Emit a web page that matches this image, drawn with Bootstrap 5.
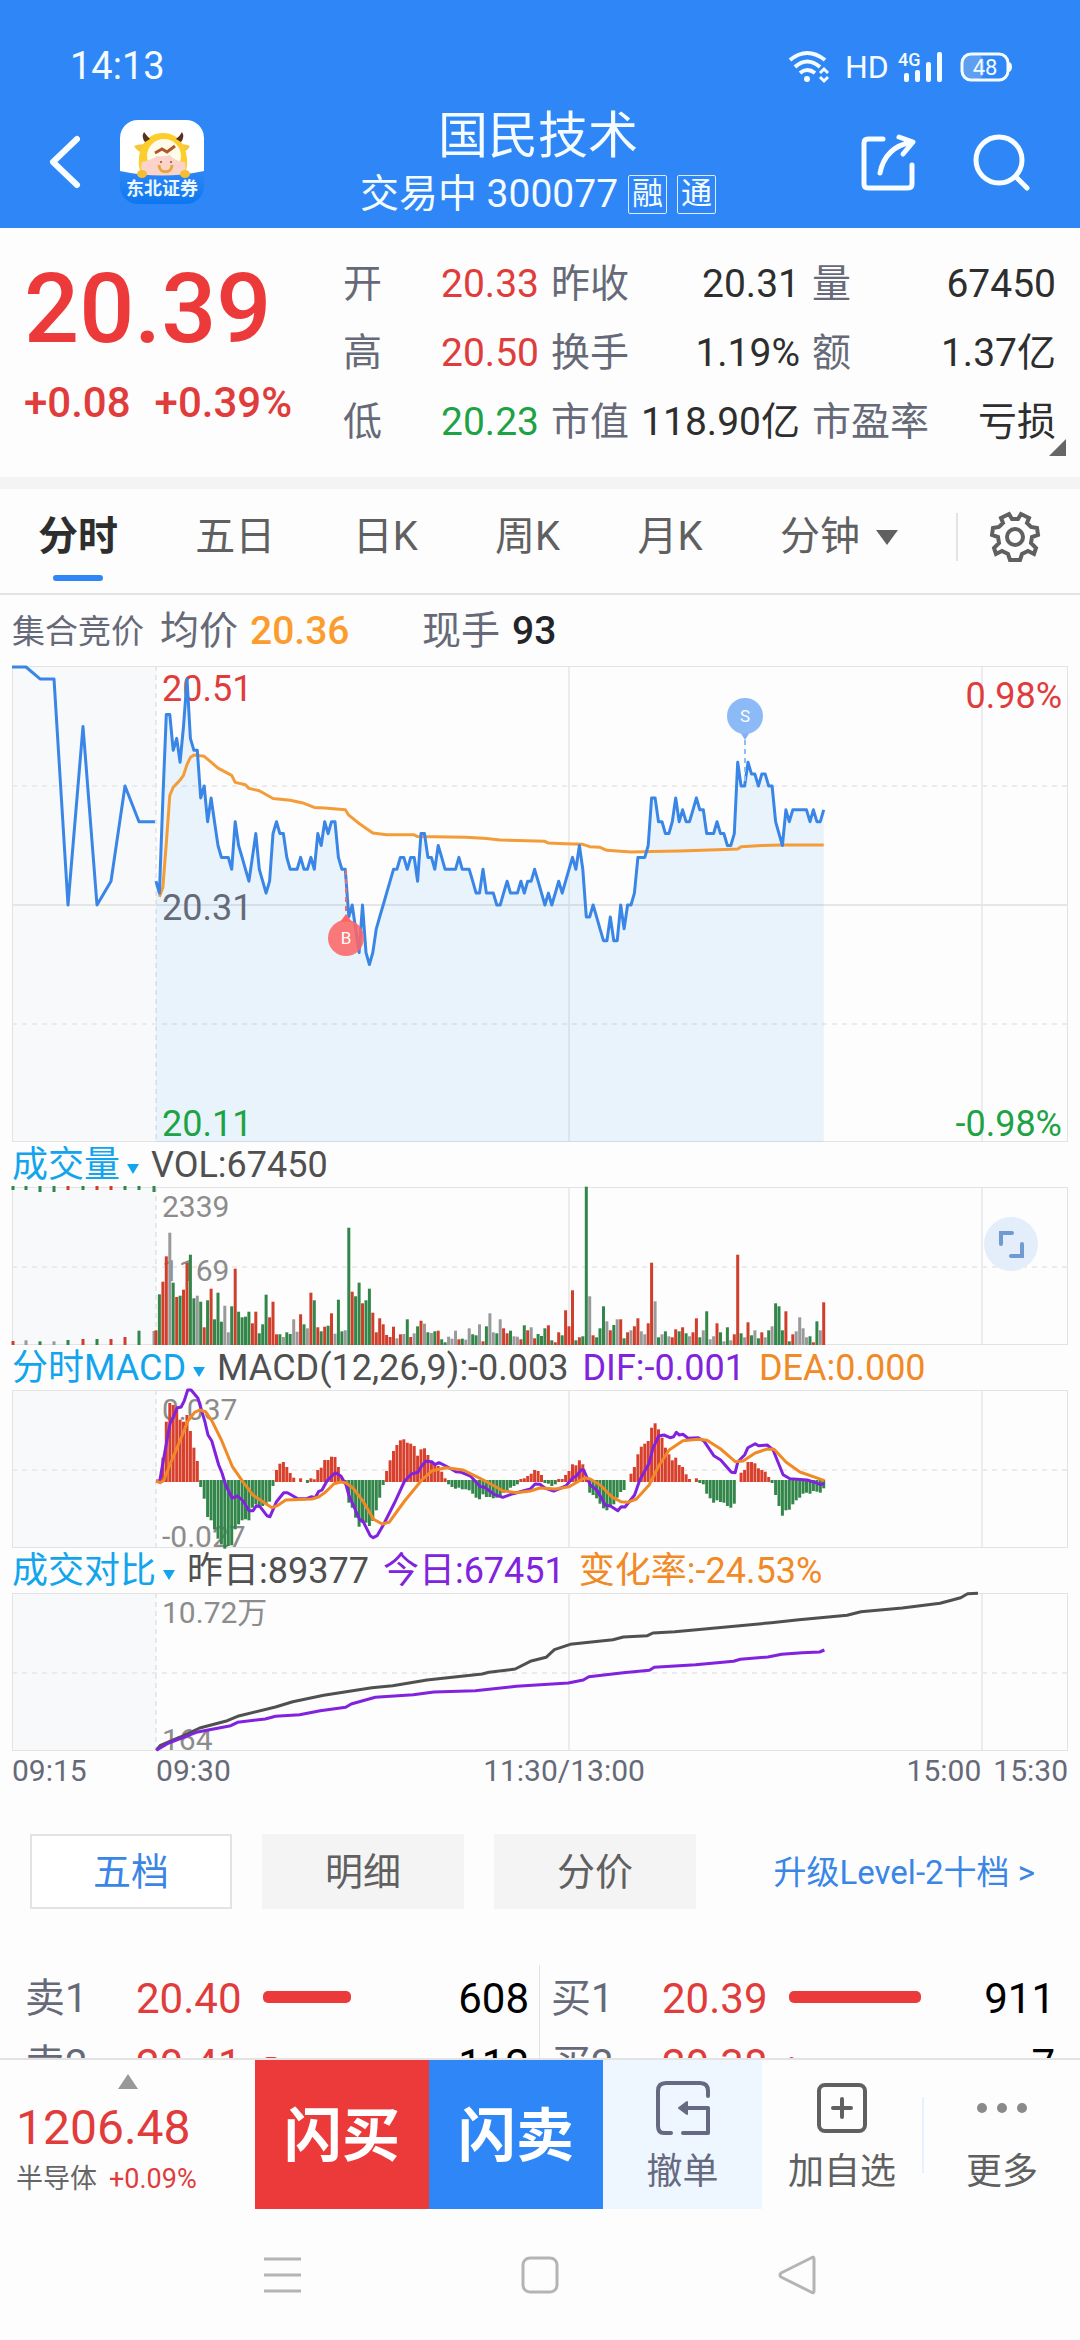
<!DOCTYPE html>
<html lang="zh-CN">
<head>
<meta charset="utf-8">
<meta name="viewport" content="width=device-width, initial-scale=1">
<title>国民技术 300077</title>
<link rel="stylesheet" href="https://cdn.jsdelivr.net/npm/bootstrap@5.3.0/dist/css/bootstrap.min.css">
<style>
:root{--up:#e03c3c;--down:#1da345;--brand:#2f86f7;--muted:#666a78;--ink:#2e2e2e;--rule:#e3e3e3}
body{font-family:Roboto,"Noto Sans CJK SC",sans-serif;font-size:39px;line-height:1.2;color:var(--ink);background:#fdfdfd}
button{font:inherit;color:inherit;background:none;border:0;padding:0}
svg{display:block;overflow:visible}
.up{color:var(--up)}.down{color:var(--down)}.soft{color:var(--muted)}
.w-med{font-weight:500}
.top{background:var(--brand);color:#f4fcff}
.status{height:102px;padding:32px 68px 0 70px;font-size:38px}
.status-icons{gap:15px}
.hd{font-size:32px;width:38px}
.titlebar{height:126px;padding:0 50px 6px 46px}
.side{flex:1 1 0}
.brand-gap{gap:36px}.tool-gap{gap:56px}
.stock-name{font-size:50px;line-height:60px;font-weight:400}
.stock-sub{font-size:39px;line-height:48px;margin-top:4px;gap:10px}
.tagbox{width:39px;height:39px;border:1px solid #dcebff;border-radius:2px;font-size:31px;line-height:36px;text-align:center}
.quote{height:249px;padding:22px 24px 0 0}
.pricebox{width:343px;padding:9px 0 0 24px}
.price{font-size:97px;line-height:100px;color:#ec3a3a}
.delta{font-size:42px;line-height:48px;margin-top:20px;gap:24px;color:#e03c3c}
.facts{gap:12px}
.facts dl{margin:0}
.facts dl>div{height:69px}
.facts dt{font-weight:400;color:var(--muted)}
.facts dd{margin:0}
.c-a{flex:196}.c-b{flex:249}.c-c{flex:244}
.corner{right:14px;bottom:21px}
.band{height:12px;background:#f4f4f4}
.period{height:106px;border-bottom:2px solid var(--rule);font-size:40px;color:#606060;padding:0 40px 8px 38px}
.period-tabs{width:860px}
.period .on{color:#2e2e2e;font-weight:700}
.period .on::after{content:"";position:absolute;left:15px;right:15px;bottom:-20px;height:6px;border-radius:3px;background:var(--brand)}
.vline{width:2px;height:48px;background:#e3e3e3}
.info{height:71px;padding:2px 0 0 12px}
.info-a{font-size:33px;width:148px}
.info b{margin-left:12px}
.info .avg{width:172px;color:#fb9c2e}
.charts{padding:0 12px}
.charts svg{width:100%;height:auto}
.caption-row{height:45px;font-size:36px;line-height:44px;color:#505050}
.caption-row button{color:#12a5ee;margin-right:12px}
.caption-row span{margin-right:14px}
.caption-row button svg{width:12px;margin-left:7px;margin-top:8px}
.violet{color:#8122de}.amber{color:#f18a26}
.axis{grid-template-columns:144fr 327fr 498fr auto;font-size:30px;line-height:40px;color:var(--muted)}
.axis-end{margin-left:12px}
.book-tabs{margin-top:43px;padding:0 45px 0 30px}
.book-tabs .nav-pair{gap:30px}
.book-tabs button{width:202px;height:75px;padding-top:3px;font-size:38px;background:#f4f4f4;color:#606060}
.book-tabs button.on{background:#fff;border:2px solid var(--rule);color:#3a86e6}
.book-tabs a{font-size:33px;color:#3a86e6;padding-top:3px}
.book{margin-top:56px;font-size:42px;min-height:0}
.ask{padding:0 10px 0 25px;border-right:1px solid var(--rule)}
.bid{padding:0 25px 0 11px}
.lvl{height:66px;color:#000;padding-top:2px}
.lvl .who{width:111px;font-size:40px;color:var(--muted)}
.lvl .at{width:127px}
.lvl .meter{height:12px;border-radius:5px;background:#ec3a3a;margin-bottom:4px}
.dock{height:151px;border-top:2px solid var(--rule);background:#fdfdfd}
.index{width:255px;padding-left:16px}
.index .num{font-size:48px;line-height:54px;margin-top:12px}
.index .sub{font-size:27px;line-height:36px;gap:12px;margin-top:6px}
.index svg{margin-left:102px;margin-top:14px}
.fast{width:174px;font-size:58px;font-weight:700;color:#fff;padding-top:4px}
.fast-buy{background:#ec3a3a}.fast-sell{background:var(--brand)}
.act{font-size:36px;line-height:44px;color:#606060;padding-top:6px}
.act svg{margin-bottom:15px}
.act-cancel{background:#eef6ff;color:#666a80}
.keys{height:131px;padding:0 264px}
</style>
</head>
<body>
<div class="vh-100 d-flex flex-column overflow-hidden">

<header class="top flex-shrink-0">
  <div class="status d-flex align-items-center justify-content-between">
    <span>14:13</span>
    <div class="status-icons d-flex align-items-center">
      <svg width="41" height="32" viewBox="0 0 41 32" fill="none" stroke="#f4fcff" stroke-width="4"><path d="M1 9Q18-5 36 9M6 16Q18 5 31 16M11 22Q18 16 26 22"/><circle cx="18" cy="28" r="3" fill="#f4fcff" stroke="none"/><path d="M31 22l4-4 4 4M31 26l4 4 4-4" stroke-width="3"/></svg>
      <span class="hd">HD</span>
      <svg width="46" height="32" viewBox="0 0 46 32"><g fill="#f4fcff"><rect x="6" y="22" width="5" height="9" rx="2"/><rect x="17" y="19" width="5" height="12" rx="2"/><rect x="28" y="11" width="5" height="20" rx="2"/><rect x="39" y="1" width="5" height="30" rx="2"/><text x="0" y="15" font-size="18" font-weight="500">4G</text></g></svg>
      <svg width="53" height="32" viewBox="0 0 53 32"><rect x="4" y="4" width="21" height="24" rx="7" fill="#5f9ff2"/><rect x="3" y="3" width="46" height="26" rx="9" fill="none" stroke="#f4fcff" stroke-width="3"/><path d="M49 11q4 0 4 5t-4 5z" fill="#f4fcff"/><text x="26" y="24" text-anchor="middle" font-size="22" fill="#f4fcff">48</text></svg>
    </div>
  </div>
  <div class="titlebar d-flex align-items-center">
    <div class="side brand-gap d-flex align-items-center">
      <button aria-label="返回"><svg width="38" height="56" viewBox="0 0 38 56" fill="none" stroke="#f8fdff" stroke-width="6" stroke-linecap="round" stroke-linejoin="round"><path d="M31 5L7 28l24 23"/></svg></button>
      <svg width="84" height="84" viewBox="0 0 84 84">
        <defs><clipPath id="lg"><rect width="84" height="84" rx="18"/></clipPath><linearGradient id="lb" x2="0" y2="1"><stop offset="0" stop-color="#2f86f7"/><stop offset="1" stop-color="#0d77ef"/></linearGradient></defs>
        <g clip-path="url(#lg)"><path fill="#fff" d="M0 0h84v60H0z"/>
        <path d="M14 26q6-3 14-1l-3 8q-7 0-11-7zM70 26q-6-3-12-1l3 7q6 0 9-6z" fill="#f6c63c"/>
        <path d="M43 13c14 0 23 11 24 26 1 10-2 16-8 18H27c-6-2-9-8-8-18 1-15 10-26 24-26z" fill="#fccd2b"/>
        <path d="M24 12q-3 5 1 10l5-3q-3-3-6-7zM62 12q3 5-1 10l-5-3q4-3 6-7z" fill="#58301f"/>
        <circle cx="44" cy="36" r="17" fill="#fffbea"/>
        <path d="M22 42q9-2 15-6 7 1 13-1 4 6 15 7 2 14-6 14H28q-9-3-6-14z" fill="#fbd3cb"/>
        <path d="M35 33l7-4 5 3 8-6" fill="none" stroke="#b0572b" stroke-width="3"/>
        <path d="M39 45c0 9 13 9 13 0" fill="none" stroke="#e8a634" stroke-width="3"/><circle cx="41" cy="42" r="1" fill="#8c4b39"/><circle cx="51" cy="42" r="1" fill="#8c4b39"/>
        <path d="M0 51q42 9 84 0v33H0z" fill="url(#lb)"/>
        <ellipse cx="22" cy="54" rx="5" ry="4" fill="#f4bd32"/><ellipse cx="65" cy="54" rx="5" ry="4" fill="#f4bd32"/>
        <text x="42" y="75" text-anchor="middle" font-size="18" font-weight="700" fill="#eaf6ff">东北证券</text></g>
      </svg>
    </div>
    <div class="text-center">
      <h1 class="stock-name m-0">国民技术</h1>
      <div class="stock-sub d-flex align-items-center"><span>交易中 300077</span><span class="tagbox">融</span><span class="tagbox">通</span></div>
    </div>
    <div class="side tool-gap d-flex align-items-center justify-content-end">
      <button aria-label="分享"><svg width="56" height="58" viewBox="0 0 56 58" fill="none" stroke="#f8fdff" stroke-width="5" stroke-linecap="round" stroke-linejoin="round"><path d="M23 6H8q-4 0-4 4v41q0 4 4 4h40q4 0 4-4V32"/><path d="M20 40Q25 14 52 9M39 4l14 5-10 12"/></svg></button>
      <button aria-label="搜索"><svg width="58" height="58" viewBox="0 0 58 58" fill="none" stroke="#f8fdff" stroke-width="5" stroke-linecap="round"><circle cx="27" cy="27" r="23"/><path d="M44 44l11 11"/></svg></button>
    </div>
  </div>
</header>

<section class="quote d-flex position-relative flex-shrink-0">
  <div class="pricebox">
    <div class="price w-med">20.39</div>
    <div class="delta w-med d-flex"><span>+0.08</span><span>+0.39%</span></div>
  </div>
  <div class="facts d-flex flex-fill">
    <dl class="c-a"><div class="d-flex align-items-center justify-content-between"><dt>开</dt><dd class="up">20.33</dd></div><div class="d-flex align-items-center justify-content-between"><dt>高</dt><dd class="up">20.50</dd></div><div class="d-flex align-items-center justify-content-between"><dt>低</dt><dd class="down">20.23</dd></div></dl>
    <dl class="c-b"><div class="d-flex align-items-center justify-content-between"><dt>昨收</dt><dd>20.31</dd></div><div class="d-flex align-items-center justify-content-between"><dt>换手</dt><dd>1.19%</dd></div><div class="d-flex align-items-center justify-content-between"><dt>市值</dt><dd>118.90亿</dd></div></dl>
    <dl class="c-c"><div class="d-flex align-items-center justify-content-between"><dt>量</dt><dd>67450</dd></div><div class="d-flex align-items-center justify-content-between"><dt>额</dt><dd>1.37亿</dd></div><div class="d-flex align-items-center justify-content-between"><dt>市盈率</dt><dd>亏损</dd></div></dl>
  </div>
  <svg class="corner position-absolute" width="17" height="17"><path d="M17 0v17H0z" fill="#666"/></svg>
</section>
<div class="band flex-shrink-0"></div>

<nav class="period d-flex align-items-center justify-content-between flex-shrink-0">
  <div class="period-tabs d-flex align-items-center justify-content-between">
    <button class="on position-relative">分时</button><button>五日</button><button>日K</button><button>周K</button><button>月K</button>
    <button class="d-flex align-items-center">分钟<svg class="ms-3" width="22" height="15"><path d="M0 0h22L11 15z" fill="#606060"/></svg></button>
  </div>
  <div class="d-flex align-items-center"><span class="vline me-4"></span>
  <button class="ms-2" aria-label="设置"><svg width="50" height="50" viewBox="0 0 50 50" fill="none" stroke="#606060" stroke-width="4"><path d="M20 48h10l2-6 6-3 6 3 2-6-5-5 1-6 6-2-1-7-6-1-4-4 2-5-8-4-3 5h-6l-3-5-8 4 2 5-4 4-6 1-1 7 6 2 1 6-5 5 2 6 6-3 6 3z"/><circle cx="25" cy="25" r="8"/></svg></button></div>
</nav>

<div class="info d-flex align-items-center flex-shrink-0 soft"><span class="info-a">集合竞价</span><span>均价</span><b class="avg w-med">20.36</b><span>现手</span><b class="w-med text-dark">93</b></div>

<main class="charts flex-shrink-0">
  <svg id="priceChart" viewBox="0 0 1056 476" role="img" aria-label="分时走势"></svg>
  <div class="caption-row d-flex align-items-center"><button class="d-flex align-items-center">成交量<svg viewBox="0 0 12 10"><path d="M0 0h12L6 10z" fill="#12a5ee"/></svg></button><span>VOL:67450</span></div>
  <svg id="volumeChart" viewBox="0 0 1056 158" role="img" aria-label="成交量"></svg>
  <div class="caption-row d-flex align-items-center"><button class="d-flex align-items-center">分时MACD<svg viewBox="0 0 12 10"><path d="M0 0h12L6 10z" fill="#12a5ee"/></svg></button><span>MACD(12,26,9):-0.003</span><span class="violet">DIF:-0.001</span><span class="amber">DEA:0.000</span></div>
  <svg id="macdChart" viewBox="0 0 1056 158" role="img" aria-label="MACD"></svg>
  <div class="caption-row d-flex align-items-center"><button class="d-flex align-items-center">成交对比<svg viewBox="0 0 12 10"><path d="M0 0h12L6 10z" fill="#12a5ee"/></svg></button><span>昨日:89377</span><span class="violet">今日:67451</span><span class="amber">变化率:-24.53%</span></div>
  <svg id="compareChart" viewBox="0 0 1056 158" role="img" aria-label="成交对比"></svg>
  <div class="axis d-grid"><span>09:15</span><span>09:30</span><span class="d-flex justify-content-between"><span>11:30/13:00</span><span>15:00</span></span><span class="axis-end">15:30</span></div>
</main>

<div class="book-tabs d-flex align-items-center justify-content-between flex-shrink-0">
  <div class="nav-pair d-flex"><button class="on">五档</button><button>明细</button><button>分价</button></div>
  <a class="text-decoration-none" href="#level2">升级Level-2十档 &gt;</a>
</div>

<section class="book d-flex flex-fill overflow-hidden">
  <div class="ask w-50">
    <div class="lvl d-flex align-items-center"><span class="who">卖1</span><span class="at up">20.40</span><span class="meter" style="width:88px"></span><span class="ms-auto">608</span></div>
    <div class="lvl d-flex align-items-center"><span class="who">卖2</span><span class="at up">20.41</span><span class="meter" style="width:16px"></span><span class="ms-auto">112</span></div>
  </div>
  <div class="bid w-50">
    <div class="lvl d-flex align-items-center"><span class="who">买1</span><span class="at up">20.39</span><span class="meter" style="width:132px"></span><span class="ms-auto">911</span></div>
    <div class="lvl d-flex align-items-center"><span class="who">买2</span><span class="at up">20.38</span><span class="meter" style="width:5px"></span><span class="ms-auto">7</span></div>
  </div>
</section>

<footer class="flex-shrink-0">
  <div class="dock d-flex">
    <div class="index"><svg width="20" height="15"><path d="M10 0l10 15H0z" fill="#999"/></svg><div class="num up">1206.48</div><div class="sub d-flex"><span style="color:#666">半导体</span><span class="up">+0.09%</span></div></div>
    <button class="fast fast-buy">闪买</button><button class="fast fast-sell">闪卖</button>
    <button class="act act-cancel d-flex flex-column align-items-center justify-content-center" style="width:159px"><svg width="54" height="54" viewBox="0 0 54 54" fill="none" stroke="#666a80" stroke-width="4" stroke-linecap="round" stroke-linejoin="round"><path d="M52 15V10q0-8-8-8H10Q2 2 2 10v35q0 7 6 7h7M27 52h25V27H27"/><path d="M23 27l8-6v12z" fill="#666a80" stroke-width="2"/></svg>撤单</button>
    <button class="act d-flex flex-column align-items-center justify-content-center" style="width:160px"><svg width="50" height="54" viewBox="0 0 50 54" fill="none" stroke="#606060" stroke-width="4" stroke-linecap="round"><rect x="2" y="4" width="46" height="46" rx="6"/><path d="M25 18v18M16 27h18"/></svg>加自选</button>
    <span class="vline align-self-center" style="height:76px;background:#e8f1fb"></span>
    <button class="act d-flex flex-column align-items-center justify-content-center flex-fill"><svg width="52" height="54"><g fill="#8a8a8a"><circle cx="6" cy="27" r="5"/><circle cx="26" cy="27" r="5"/><circle cx="46" cy="27" r="5"/></g></svg>更多</button>
  </div>
  <div class="keys d-flex align-items-center justify-content-between">
    <button aria-label="最近任务"><svg width="38" height="40" viewBox="0 0 38 40" stroke="#b4b4b4" stroke-width="3"><path d="M0 4h37M0 20h37M0 36h37"/></svg></button>
    <button aria-label="主页"><svg width="38" height="40" viewBox="0 0 38 40" fill="none" stroke="#b4b4b4" stroke-width="3"><rect x="2" y="3" width="34" height="34" rx="7"/></svg></button>
    <button aria-label="后退"><svg width="38" height="40" viewBox="0 0 38 40" fill="none" stroke="#b4b4b4" stroke-width="3" stroke-linejoin="round"><path d="M36 4v32q0 3-3 1L3 22q-2-2 0-4L33 3q3-2 3 1z"/></svg></button>
  </div>
</footer>
</div>

<script src="https://cdn.jsdelivr.net/npm/bootstrap@5.3.0/dist/js/bootstrap.bundle.min.js"></script>
<script>
// x of a trading minute; 09:30 sits at 144 and 11:30 at 557
const mx = i => +(144 + i * 3.442).toFixed(1);
const RED = '#cf3f2c', GREEN = '#33864a', GREY = '#9a9a9a';
const path = (pts, color, w = 3) => `<polyline points="${pts.map(p => p.join()).join(' ')}" fill="none" stroke="${color}" stroke-width="${w}" stroke-linejoin="round"/>`;
const label = (x, y, s, color, size, anchor = 'start') => `<text x="${x}" y="${y}" fill="${color}" font-size="${size}" text-anchor="${anchor}">${s}</text>`;

function frame(h, solidMid) {
  const dash = y => `<path d="M0 ${y}H1056" stroke="#ebebeb" stroke-width="2" stroke-dasharray="5 5"/>`;
  return `<rect width="144" height="${h}" fill="#f7f9fb"/>
    <path d="M557 0V${h}M970 0V${h}" stroke="#ececee" stroke-width="2"/>
    ${solidMid ? dash(h / 4 + 1) + dash(h * 3 / 4 + 1) + `<path d="M0 ${h / 2 + 1}H1056" stroke="#e6e6e6" stroke-width="2"/>` : dash(h / 2 + 1)}
    <path d="M144 0V${h}" stroke="#e6e8eb" stroke-width="2" stroke-dasharray="5 4"/>
    <rect x=".5" y=".5" width="1055" height="${h - 1}" fill="none" stroke="#e3e3e3"/>`;
}

/* price, in cents above the previous close */
const price = [2,1,9,16,16,13,14,12,15,19,14,13,13,9,10,7,9,7,5,4,4,4,3,7,5,4,3,2,4,6,3,2,1,2,6,7,6,6,4,3,3,3,4,3,3,4,3,6,5,7,6,7,7,4,3,3,-1,0,-2,-4,0,-4,-5,-4,-2,-1,0,1,2,3,3,4,4,3,4,4,2,6,6,4,4,3,5,4,3,3,3,3,4,3,3,3,2,1,1,3,1,1,1,0,0,1,2,1,1,1,2,1,2,2,3,2,1,0,1,0,1,2,1,2,3,4,3,5,3,-1,-1,0,-1,-2,-3,-3,-1,-3,-3,0,-2,0,0,1,4,4,4,5,9,9,7,7,6,6,7,9,7,8,7,7,8,9,8,8,6,6,6,7,6,6,5,5,6,12,10,10,12,11,11,10,11,11,10,10,7,6,5,8,7,8,8,8,8,8,7,8,7,7,8];
const average = [[1,.7],[2,1.5],[3,5.2],[4,9.2],[5,9.9],[6,10.2],[7,10.5],[8,10.9],[9,11.8],[10,12.4],[11,12.6],[14,12.5],[16,12],[18,11.5],[22,10.9],[23,10.3],[26,10.1],[27,9.8],[30,9.6],[34,8.95],[39,8.8],[43,8.55],[46,8.2],[49,8.15],[55,8],[56,7.55],[59,6.85],[63,6.05],[67,5.9],[75,5.9],[76,5.75],[90,5.7],[96,5.6],[100,5.45],[113,5.35],[114,5.2],[119,5.15],[124,5.1],[126,4.9],[129,4.85],[131,4.6],[138,4.45],[144,4.5],[152,4.55],[163,4.65],[169,4.7],[170,4.9],[176,5],[182,5.05],[194,5.05]];
const auction = [[0,20],[14,20],[28,19],[42,19],[56,0],[71,15],[85,0],[99,2],[113,10],[127,7],[143,7]];
const py = c => +(239 - c * 11.9).toFixed(1);
const pts = price.map((c, i) => [mx(i), py(c)]);
priceChart.innerHTML = frame(476, true)
  + `<polygon points="144,476 ${pts.map(p => p.join()).join(' ')} ${mx(194)},476" fill="#2f9ff7" fill-opacity=".1"/>`
  + path(auction.map(([x, c]) => [x, py(c)]), '#3a86e6')
  + path(average.map(([i, c]) => [mx(i), py(c)]), '#f39c38')
  + label(150, 35, '20.51', '#e03c3c', 36) + label(150, 254, '20.31', '#666a78', 36)
  + path(pts, '#3a86e6')
  + `<path d="M334 204v50" stroke="#ef6a6a" stroke-width="2" stroke-dasharray="5 4"/><path d="M328 256l6-8 6 8z" fill="#f66"/><circle cx="334" cy="272" r="18" fill="#fa6666" fill-opacity=".88"/>`
  + `<path d="M733 74v42" stroke="#8fbcf2" stroke-width="2" stroke-dasharray="5 4"/><path d="M728 66h10l-5 8z" fill="#7eb2f4"/><circle cx="733" cy="50" r="18" fill="#8cbaf6"/>`
  + label(334, 278, 'B', '#fff', 17, 'middle') + label(733, 56, 'S', '#fff', 17, 'middle')
  + label(150, 470, '20.11', '#1da345', 36)
  + label(1050, 42, '0.98%', '#e03c3c', 36, 'end') + label(1050, 470, '-0.98%', '#1da345', 36, 'end');

/* volume per minute: colour letter and height in thirds of a pixel */
const volume = 'r44 g152 r190 r266 n337 g187 r144 g148 r166 r246 g271 g140 n148 g130 r53 g134 r169 g77 g157 g70 n118 n38 g116 r229 g100 g83 g85 g100 r65 r100 g35 g62 g151 r83 r130 r32 g32 n24 g38 g33 n77 n40 r92 g62 n50 r157 g134 r53 g41 r55 g58 r95 n34 g136 g41 n44 g352 r160 g146 g187 r125 g134 g169 r97 r38 r80 r62 r30 r24 r55 n20 r32 n33 g77 r24 n35 g56 r73 n64 g38 n36 g41 r43 g17 g8 n25 n19 n43 r17 g19 n16 n50 g32 g29 n62 r11 g56 n95 n38 g35 n77 r50 r35 g43 n26 n25 r17 g59 r44 n53 r20 g33 g27 g50 r59 g14 r8 r38 g29 r104 r56 r164 g14 r23 g26 g475 n146 r29 g23 g50 g116 n71 r44 g60 n77 r77 g20 r38 n44 r56 r80 n41 n32 r65 r247 n131 g23 n32 g41 n26 r23 r47 g41 r53 g35 n26 r38 r80 g23 n44 g101 n17 n26 r65 g38 n11 g53 n14 r32 r271 g35 n23 r68 g29 n44 g20 r38 n23 g44 n56 g125 g116 g44 r101 g11 r32 n41 n83 n50 n23 g26 r8 g71 n44 r128'.split(' ');
const tone = {r: RED, g: GREEN, n: GREY};
const bar = (x, top, h, c) => `<rect x="${(x - 1.5).toFixed(1)}" y="${top.toFixed(1)}" width="3" height="${h.toFixed(1)}" fill="${c}"/>`;
const preX = [1,14,28,42,56,71,85,99,113,127,142];
const preTop = 'ggggrgrrggg', preLow = [12,14,11,11,15,18,18,18,24,43,42], preTone = 'rngngrgrrgn';
volumeChart.innerHTML = frame(158) + label(150, 30, '2339', '#8c8c8c', 30) + label(150, 94, '1169', '#8c8c8c', 30)
  + preX.map((x, k) => bar(x, -1, k == 2 || k == 3 || k == 10 ? 6 : 4, tone[preTop[k]]) + bar(x, 158 - preLow[k] / 3, preLow[k] / 3, tone[preTone[k]])).join('')
  + volume.map((v, i) => bar(mx(i), 158 - v.slice(1) / 3, v.slice(1) / 3, tone[v[0]])).join('')
  + `<circle cx="999" cy="57" r="27" fill="#e3eefa"/><path d="M989 57V46h11M1010 57v12h-11" fill="none" stroke="#6f9bd0" stroke-width="4" stroke-linecap="round"/>`;

/* MACD histogram and its two lines */
const macd = [0,0,70,178,234,228,215,184,178,198,150,100,60,-18,-53,-108,-118,-145,-173,-190,-203,-195,-193,-145,-130,-118,-115,-118,-80,-70,-75,-75,-68,-62,-15,33,52,57,42,24,10,0,8,0,-6,8,5,33,40,63,63,73,72,42,10,-10,-65,-80,-110,-137,-125,-125,-135,-120,-88,-50,-12,30,62,90,108,122,125,115,112,105,76,95,98,78,55,50,45,28,8,-10,-18,-23,-20,-25,-25,-28,-38,-50,-55,-40,-48,-48,-52,-50,-45,-35,-28,-20,-15,-10,6,8,15,22,33,30,18,-6,-8,-15,-10,6,6,18,30,50,47,62,50,10,-35,-42,-52,-68,-82,-88,-75,-70,-50,-33,-27,0,22,42,80,103,112,120,160,173,155,130,100,80,62,70,48,42,20,6,0,8,-6,-10,-38,-52,-65,-58,-63,-65,-75,-80,-68,0,25,33,57,57,53,38,33,28,12,-6,-42,-75,-104,-88,-86,-70,-58,-50,-38,-35,-38,-30,-32,-35,-22];
// each line: morning points, then afternoon points measured from the right half of the canvas
const difAm = [453,1023,464,1023,472,975,485,900,494,850,505,827,514,804,526,801,535,783,545,750,555,750,575,775,595,845,604,885,615,903,635,975,645,1000,655,1035,674,1074,690,1068,706,1083,723,1112,735,1112,745,1097,755,1100,775,1127,784,1130,803,1085,824,1058,835,1058,865,1076,890,1076,905,1070,915,1073,925,1055,935,1050,950,1022,974,998,990,1008,1005,1035,1013,1065,1045,1140,1054,1143,1075,1187,1084,1193,1095,1187,1113,1155,1145,1090,1175,1023,1195,1002,1214,997,1223,980,1236,964,1254,965,1263,974,1275,968,1295,978,1324,995,1340,997,1366,1008,1395,1040,1405,1040,1435,1063,1460,1072,1490,1061,1540,1047,1554,1032,1568,1033];
const difPm = [14,1044,40,1053,75,1038,95,1014,106,1008,120,989,127,990,146,1035,165,1050,190,1096,205,1098,226,1112,236,1100,247,1101,275,1065,290,1020,317,970,328,925,345,888,360,885,378,893,388,890,396,877,405,885,415,883,430,895,460,893,477,904,505,947,525,960,556,997,567,998,575,965,595,944,604,923,625,911,635,917,660,915,677,930,706,1004,726,1016,776,1020,800,1028,815,1034,826,1030];
const deaAm = [453,1023,465,1028,475,1022,495,970,526,894,545,844,565,817,580,810,597,815,615,842,643,900,675,980,705,1025,735,1066,790,1103,805,1097,830,1080,905,1077,925,1071,945,1057,970,1031,990,1026,1005,1029,1025,1044,1055,1085,1085,1138,1110,1152,1130,1147,1175,1083,1225,1020,1255,992,1295,983,1345,990,1400,1018,1460,1052,1500,1058,1540,1053,1568,1044];
const deaPm = [45,1047,85,1040,130,1013,146,1017,175,1035,210,1072,235,1085,255,1087,280,1077,317,1035,345,978,375,930,415,902,460,898,485,901,525,927,567,965,590,963,625,939,660,927,680,928,715,967,755,996,800,1012,826,1022];
const unpack = (flat, dx, sx, dy, sy) => { const o = []; for (let k = 0; k < flat.length; k += 2) o.push([+((flat[k] + dx) / sx - 12).toFixed(1), +((flat[k + 1] - dy) / sy).toFixed(1)]); return o; };
const day = (am, pm) => unpack(am, 0, 2.904, 750, 3).concat(unpack(pm, 1568, 2.904, 750, 3));
macdChart.innerHTML = frame(158) + label(150, 30, '0.037', '#8c8c8c', 30) + label(150, 157, '-0.027', '#8c8c8c', 30)
  + macd.map((v, i) => v ? bar(mx(i), v > 0 ? 91 - v / 3 : 90, Math.abs(v) / 3 + 1, v > 0 ? '#d8402c' : GREEN) : '').join('')
  + path(day(difAm, difPm), '#8122de') + path(day(deaAm, deaPm), '#f18a26');

/* cumulative volume, yesterday against today */
const yesterday = [227,602,233,587,262,562,290,535,330,513,345,500,400,472,425,456,470,437,540,414,570,408,620,391,700,373,710,368,748,358,770,335,793,323,805,300,828,284,890,270,905,262,940,258,948,250,980,246,1120,219,1160,210,1230,197,1250,186,1310,175,1365,161,1395,144,1405,132,1420,131];
const today = [227,602,245,580,270,560,285,548,335,528,345,518,385,508,400,500,435,495,465,483,502,473,510,463,545,443,600,435,630,427,690,423,750,410,825,400,847,391,855,381,905,369,943,362,950,353,1010,345,1065,335,1075,329,1115,322,1135,314,1165,309,1190,307,1197,301];
compareChart.innerHTML = frame(158) + label(150, 30, '10.72万', '#8c8c8c', 30) + label(150, 157, '164', '#8c8c8c', 30)
  + path(unpack(yesterday, 0, 1.452, 130, 3), '#505050') + path(unpack(today, 0, 1.452, 130, 3), '#8122de');
</script>
</body>
</html>
